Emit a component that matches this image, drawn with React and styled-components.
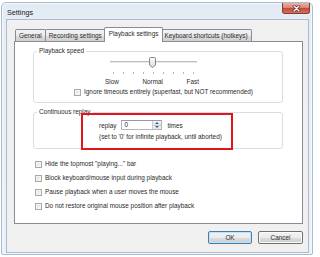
import React from 'react';
import styled, { createGlobalStyle } from 'styled-components';

const GlobalStyle = createGlobalStyle`
  html, body {
    margin: 0;
    padding: 0;
    background: #fff;
  }
  body {
    font-family: "Liberation Sans", Arial, sans-serif;
    font-size: 6.4px;
    color: #2b2b2b;
  }
  * {
    box-sizing: border-box;
  }
`;

const Page = styled.div`
  width: 320px;
  height: 257px;
  padding: 2px 0 0 1px;
  overflow: hidden;
`;

const Window = styled.div`
  width: 312px;
  height: 253px;
  border: 1px solid #a9bbcf;
  border-radius: 5px 5px 2px 2px;
  background: linear-gradient(#e2eaf3, #e9eff6 40px, #ebf1f7);
  padding: 0 3px 1px 4px;
  display: flex;
  flex-direction: column;
  box-shadow: inset 0 0 0 1px #f5f8fb;
`;

const TitleBar = styled.div`
  height: 16px;
  display: flex;
  justify-content: space-between;
  align-items: flex-start;
`;

const Title = styled.div`
  margin: 6px 0 0 1px;
  font-size: 7.2px;
  line-height: 8px;
  color: #1a1a1a;
`;

const CloseButton = styled.div`
  width: 28px;
  height: 11px;
  margin-right: -1px;
  border: 1px solid #8a3b30;
  border-top: none;
  border-radius: 0 0 3px 3px;
  background: linear-gradient(#eab1a8, #dc8576 45%, #c64a36 55%, #d4705c);
  display: flex;
  align-items: center;
  justify-content: center;
`;

const Client = styled.div`
  flex: 1;
  border: 1px solid #adbacb;
  background: #f0f0f0;
  padding: 7px 5px 8px 7px;
  display: flex;
  flex-direction: column;
`;

const TabRow = styled.div`
  height: 14px;
  display: flex;
  align-items: flex-end;
  padding-left: 1px;
  position: relative;
  z-index: 1;
`;

const Tab = styled.div`
  height: ${(p) => (p.active ? '15px' : '12px')};
  margin: ${(p) => (p.active ? '0 -2px -1px -2px' : '0 0 0 -1px')};
  padding: ${(p) => (p.active ? '1px 4px 0' : '1px 3px 0')};
  line-height: 10px;
  border: 1px solid #898c95;
  border-bottom: none;
  border-radius: 2px 2px 0 0;
  background: ${(p) =>
    p.active ? '#fff' : 'linear-gradient(#f3f3f3, #ebebeb 50%, #dddddd 51%, #cfcfcf)'};
  position: relative;
  z-index: ${(p) => (p.active ? 2 : 1)};
  white-space: nowrap;
  &:first-child {
    margin-left: 0;
  }
`;

const Panel = styled.div`
  flex: 1;
  border: 1px solid #898c95;
  background: #fff;
  padding: 5px 19px 0 18px;
  display: flex;
  flex-direction: column;
  position: relative;
`;

const Group = styled.fieldset`
  margin: ${(p) => (p.spaced ? '5px 0 0' : '0')};
  padding: 0;
  min-width: 0;
  border: 1px solid #d5dfe5;
  border-radius: 3px;
`;

const Caption = styled.legend`
  margin-left: 3px;
  padding: 0 2px;
  line-height: 8px;
  height: 8px;
`;

const GroupBody = styled.div`
  display: flex;
  flex-direction: column;
  padding: ${(p) => p.pad};
`;

const SpeedSlider = styled.div`
  margin-left: 71px;
  width: 94px;
  display: flex;
  flex-direction: column;
`;

const TrackArea = styled.div`
  height: 11px;
  margin: 0 2px 0 5px;
  position: relative;
`;

const Track = styled.div`
  position: absolute;
  left: 0;
  right: 0;
  top: 4px;
  height: 2px;
  border-top: 1px solid #bcbcbc;
  background: #e8e8e8;
`;

const Thumb = styled.svg`
  position: absolute;
  left: 39px;
  top: 0;
`;

const Ticks = styled.div`
  margin-top: 4px;
  height: 2px;
  padding: 0 5px 0 8px;
  display: flex;
  justify-content: space-between;
`;

const Tick = styled.span`
  width: 1px;
  height: 2px;
  background: #b8b8b8;
`;

const Labels = styled.div`
  margin-top: 4px;
  line-height: 8px;
  display: flex;
  justify-content: space-between;
`;

const CheckRow = styled.div`
  height: 8px;
  margin-left: ${(p) => p.indent || 0}px;
  margin-top: ${(p) => p.top || 0}px;
  display: flex;
  align-items: center;
  gap: 3px;
  line-height: 8px;
  white-space: nowrap;
`;

const Box = styled.span`
  width: 7px;
  height: 7px;
  flex: none;
  border: 1px solid #a9a9a9;
  background: linear-gradient(135deg, #dde0e4, #f8f8f8);
  box-shadow: inset 0 0 0 1px #f4f4f4;
`;

const ReplayRow = styled.div`
  height: 10px;
  display: flex;
  align-items: center;
  gap: 5px;
`;

const SpinBox = styled.div`
  width: 41px;
  height: 10px;
  border: 1px solid #b3b6bc;
  border-top-color: #979ca4;
  background: #fff;
  display: flex;
`;

const SpinValue = styled.div`
  flex: 1;
  padding-left: 2px;
  line-height: 8px;
`;

const SpinButtons = styled.div`
  width: 9px;
  display: flex;
  flex-direction: column;
  border-left: 1px solid #c6ced8;
`;

const SpinHalf = styled.div`
  flex: 1;
  display: flex;
  align-items: center;
  justify-content: center;
  background: linear-gradient(#f4f6f9, #dfe5ec);
  & + & {
    border-top: 1px solid #c6ced8;
  }
`;

const Arrow = styled.span`
  width: 0;
  height: 0;
  border-left: 2px solid transparent;
  border-right: 2px solid transparent;
  ${(p) =>
    p.down ? 'border-top: 2px solid #4a5f86;' : 'border-bottom: 2px solid #4a5f86;'}
`;

const Hint = styled.div`
  margin-top: 3px;
  line-height: 8px;
  white-space: nowrap;
`;

const Highlight = styled.div`
  position: absolute;
  left: 66px;
  top: 71px;
  width: 152px;
  height: 37px;
  border: 2px solid #e2141c;
  pointer-events: none;
`;

const CheckList = styled.div`
  margin: 11px 0 0 2px;
  display: flex;
  flex-direction: column;
  gap: 6px;
`;

const ButtonRow = styled.div`
  margin-top: 7px;
  height: 13px;
  display: flex;
  justify-content: flex-end;
  gap: 6px;
`;

const Button = styled.div`
  width: ${(p) => p.w}px;
  height: 13px;
  border: 1px solid ${(p) => (p.primary ? '#3c7fb1' : '#707070')};
  border-radius: 2px;
  background: linear-gradient(#f2f2f2, #ebebeb 50%, #dddddd 51%, #cfcfcf);
  box-shadow: inset 0 0 0 1px ${(p) => (p.primary ? '#bfe3f5' : '#fbfbfb')};
  display: flex;
  align-items: center;
  justify-content: center;
  line-height: 8px;
`;

const App = () => {
  const ticks = Array.from({ length: 9 });
  return (
    <>
      <GlobalStyle />
      <Page>
        <Window>
          <TitleBar>
            <Title>Settings</Title>
            <CloseButton>
              <svg width="9" height="7" viewBox="0 0 9 7">
                <path d="M2 1 L7 6 M7 1 L2 6" stroke="#5b2019" strokeWidth="2.6" strokeLinecap="round" />
                <path d="M2 1 L7 6 M7 1 L2 6" stroke="#fff" strokeWidth="1.4" strokeLinecap="round" />
              </svg>
            </CloseButton>
          </TitleBar>
          <Client>
            <TabRow>
              <Tab>General</Tab>
              <Tab>Recording settings</Tab>
              <Tab active>Playback settings</Tab>
              <Tab>Keyboard shortcuts (hotkeys)</Tab>
            </TabRow>
            <Panel>
              <Group>
                <Caption>Playback speed</Caption>
                <GroupBody pad="2px 0 6px">
                  <SpeedSlider>
                    <TrackArea>
                      <Track />
                      <Thumb width="7" height="11" viewBox="0 0 7 11">
                        <defs>
                          <linearGradient id="thumbFill" x1="0" x2="0" y1="0" y2="1">
                            <stop offset="0" stopColor="#fdfdfd" />
                            <stop offset="1" stopColor="#d9d9d9" />
                          </linearGradient>
                        </defs>
                        <path
                          d="M0.5 1.5 Q0.5 0.5 1.5 0.5 H5.5 Q6.5 0.5 6.5 1.5 V8 L3.5 10.5 L0.5 8 Z"
                          fill="url(#thumbFill)"
                          stroke="#858585"
                          strokeWidth="1"
                        />
                      </Thumb>
                    </TrackArea>
                    <Ticks>
                      {ticks.map((_, i) => (
                        <Tick key={i} />
                      ))}
                    </Ticks>
                    <Labels>
                      <span>Slow</span>
                      <span>Normal</span>
                      <span>Fast</span>
                    </Labels>
                  </SpeedSlider>
                  <CheckRow indent={40} top={2}>
                    <Box />
                    Ignore timeouts entirely (superfast, but NOT recommended)
                  </CheckRow>
                </GroupBody>
              </Group>
              <Group spaced>
                <Caption>Continuous replay</Caption>
                <GroupBody pad="4px 0 7px 65px">
                  <ReplayRow>
                    <span>replay</span>
                    <SpinBox>
                      <SpinValue>0</SpinValue>
                      <SpinButtons>
                        <SpinHalf>
                          <Arrow />
                        </SpinHalf>
                        <SpinHalf>
                          <Arrow down />
                        </SpinHalf>
                      </SpinButtons>
                    </SpinBox>
                    <span>times</span>
                  </ReplayRow>
                  <Hint>(set to '0' for infinite playback, until aborted)</Hint>
                </GroupBody>
              </Group>
              <CheckList>
                <CheckRow>
                  <Box />
                  Hide the topmost "playing..." bar
                </CheckRow>
                <CheckRow>
                  <Box />
                  Block keyboard/mouse input during playback
                </CheckRow>
                <CheckRow>
                  <Box />
                  Pause playback when a user moves the mouse
                </CheckRow>
                <CheckRow>
                  <Box />
                  Do not restore original mouse position after playback
                </CheckRow>
              </CheckList>
              <Highlight />
            </Panel>
            <ButtonRow>
              <Button primary w={44}>OK</Button>
              <Button w={45}>Cancel</Button>
            </ButtonRow>
          </Client>
        </Window>
      </Page>
    </>
  );
};

export default App;
